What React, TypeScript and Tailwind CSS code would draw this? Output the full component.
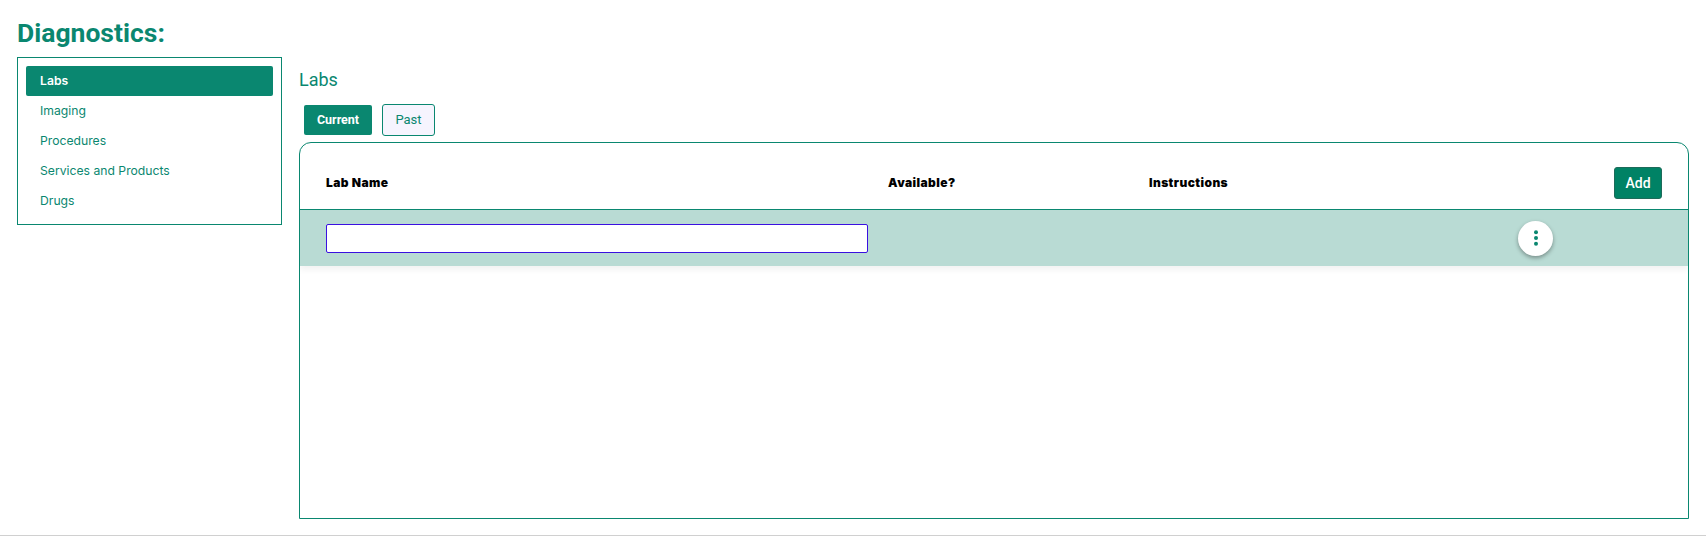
import { useState } from "react";

const TABS = ["Labs", "Imaging", "Procedures", "Services and Products", "Drugs"];

export default function App() {
  const [labName, setLabName] = useState("");

  return (
    <div className="box-border flex h-[536px] flex-col border-b border-[#d0d0d0] bg-white pt-[16px] pl-[17px] pr-[17px] font-['Roboto',sans-serif]">
      <h1 className="h-[34px] text-[26.5px] leading-[34px] font-bold text-[#0a8770]">Diagnostics:</h1>

      <div className="mt-[7px] flex items-start gap-[17px]">
        <aside className="box-border h-[168px] w-[265px] shrink-0 border border-[#0a8770] p-2">
          <ul className="flex flex-col font-['Inter',sans-serif] text-[12.2px]">
            {TABS.map((tab) => (
              <li
                key={tab}
                className={
                  tab === "Labs"
                    ? "flex h-[30px] items-center rounded-[2px] bg-[#0a8770] pl-[14px] font-semibold text-white"
                    : "flex h-[30px] items-center pt-px pl-[14px] text-[#0a8770]"
                }
              >
                {tab}
              </li>
            ))}
          </ul>
        </aside>

        <main className="min-w-0 flex-1">
          <h2 className="mt-[11px] h-[24px] text-[18px] leading-[24px] font-normal text-[#0a8770]">Labs</h2>

          <div className="mt-[12px] flex items-center gap-[10px] pl-[5px]">
            <button className="h-[30px] w-[68px] rounded-[2px] bg-[#0a8770] text-[12.5px] font-bold text-white">Current</button>
            <button className="h-[32px] w-[53px] rounded-[3px] border border-[#0a8770] bg-[#f6f4fe] text-[13px] text-[#0a8770]">Past</button>
          </div>

          <section className="mt-[6px] box-border h-[377px] overflow-hidden rounded-tl-[12px] rounded-tr-[12px] border border-[#0a8770]">
            <div className="box-border flex h-[67px] items-center border-b border-[#0a8770] pt-[14px] font-['Inter',sans-serif] text-[12px] font-black tracking-[0.035em] text-black">
              <span className="ml-[26px] w-[562px]">Lab Name</span>
              <span className="w-[261px]">Available?</span>
              <span className="flex-1">Instructions</span>
              <button className="mr-[26px] h-[32px] w-[48px] rounded-[3px] border border-[#1d6b5a] bg-[#008265] font-['Roboto',sans-serif] text-[14px] font-medium tracking-normal text-white">
                Add
              </button>
            </div>

            <div className="flex h-[56px] items-center bg-[#b9dbd4] shadow-[0_4px_6px_rgba(0,0,0,0.05)]">
              <input
                value={labName}
                onChange={(e) => setLabName(e.target.value)}
                className="ml-[26px] box-border h-[29px] w-[542px] rounded-[2px] border border-[#3a10e0] bg-white outline-none"
              />
              <button className="ml-[650px] flex h-[35px] w-[35px] items-center justify-center rounded-full bg-white shadow-[0_2px_4px_rgba(0,0,0,0.35)]">
                <svg viewBox="0 0 4 16" className="h-[16px] w-[4px] fill-[#0a8770]">
                  <circle cx="2" cy="2.3" r="2" />
                  <circle cx="2" cy="8" r="2" />
                  <circle cx="2" cy="13.7" r="2" />
                </svg>
              </button>
            </div>
          </section>
        </main>
      </div>
    </div>
  );
}
